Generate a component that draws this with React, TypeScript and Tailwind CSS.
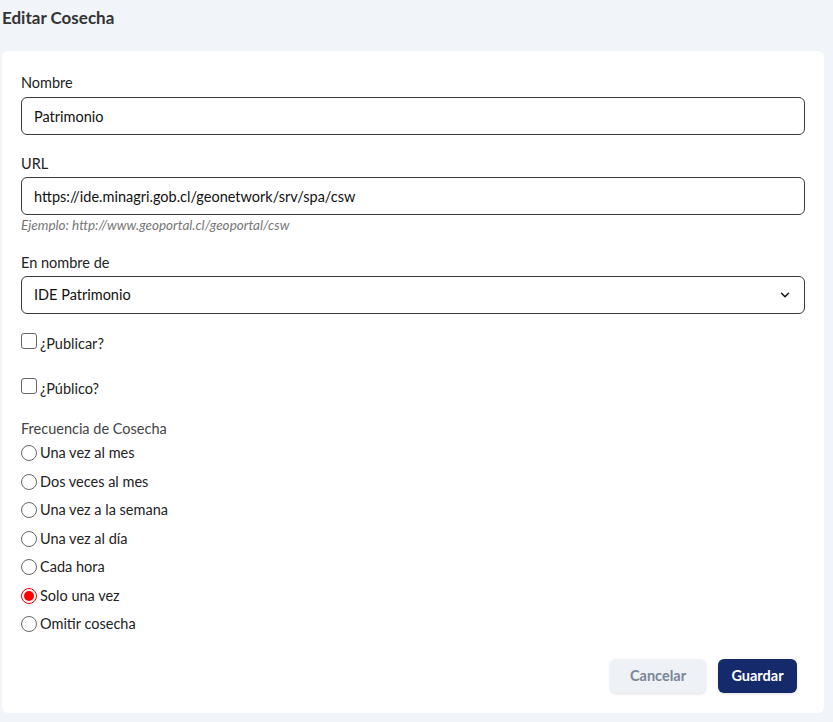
import { ChevronDown } from "lucide-react";

const FREQUENCIES = [
  "Una vez al mes",
  "Dos veces al mes",
  "Una vez a la semana",
  "Una vez al día",
  "Cada hora",
  "Solo una vez",
  "Omitir cosecha",
];

const inputClassName =
  "h-[38px] w-full rounded-md border border-[#3a3a3a] bg-white px-3 text-[14.5px] text-[#111]";

export default function App() {
  return (
    <div
      className="min-h-[722px] bg-[#f1f4f8] pb-2 text-[#222]"
      style={{ fontFamily: "Lato, 'Noto Sans', sans-serif" }}
    >
      <h1 className="h-[36px] pl-[2px] pt-[5px] text-[17px] font-bold text-[#333]">Editar Cosecha</h1>
      <div className="mx-[2px] mr-[9px] mt-[15px] rounded-md bg-white px-[19px] pb-[20px] pt-[22px]">
        <label className="block text-[14.5px] leading-[20px]">Nombre</label>
        <input className={`${inputClassName} mt-[4px]`} defaultValue="Patrimonio" />

        <label className="mt-[19px] block text-[14.5px] leading-[20px]">URL</label>
        <input
          className={`${inputClassName} mt-[3px]`}
          defaultValue="https://ide.minagri.gob.cl/geonetwork/srv/spa/csw"
        />
        <p className="mt-[1px] text-[13.5px] italic leading-[18px] text-[#777]">
          Ejemplo: http://www.geoportal.cl/geoportal/csw
        </p>

        <label className="mt-[19px] block text-[14.5px] leading-[20px]">En nombre de</label>
        <div className={`${inputClassName} mt-[3px] flex items-center justify-between`}>
          <span>IDE Patrimonio</span>
          <ChevronDown size={14} strokeWidth={2.5} />
        </div>

        <label className="mt-[19px] flex items-end gap-[3px] text-[14.5px] leading-[20px]">
          <span className="mb-[5px] h-[16px] w-[16px] rounded-[3px] border border-[#666]" />
          ¿Publicar?
        </label>
        <label className="mt-[24px] flex items-end gap-[3px] text-[14.5px] leading-[20px]">
          <span className="mb-[5px] h-[16px] w-[16px] rounded-[3px] border border-[#666]" />
          ¿Público?
        </label>

        <p className="mt-[20px] text-[14.5px] leading-[20px] text-[#444]">Frecuencia de Cosecha</p>
        <div className="flex flex-col">
          {FREQUENCIES.map((label) => {
            const checked = label === "Solo una vez";
            return (
              <label key={label} className="flex h-[28.5px] items-center gap-[3px] text-[14.5px]">
                <span
                  className={`flex h-[16px] w-[16px] items-center justify-center rounded-full border ${
                    checked ? "border-[#e00]" : "border-[#666]"
                  }`}
                >
                  {checked ? <span className="h-[10px] w-[10px] rounded-full bg-[#f00]" /> : null}
                </span>
                {label}
              </label>
            );
          })}
        </div>

        <div className="mt-[20px] flex justify-end gap-3 pr-[8px]">
          <button className="h-[34px] w-[96px] rounded-md bg-[#eef1f5] text-[14.5px] font-bold text-[#7a8699] shadow-sm">
            Cancelar
          </button>
          <button className="h-[34px] w-[79px] rounded-md bg-[#152a6b] text-[14.5px] font-bold text-white shadow-sm">
            Guardar
          </button>
        </div>
      </div>
    </div>
  );
}
